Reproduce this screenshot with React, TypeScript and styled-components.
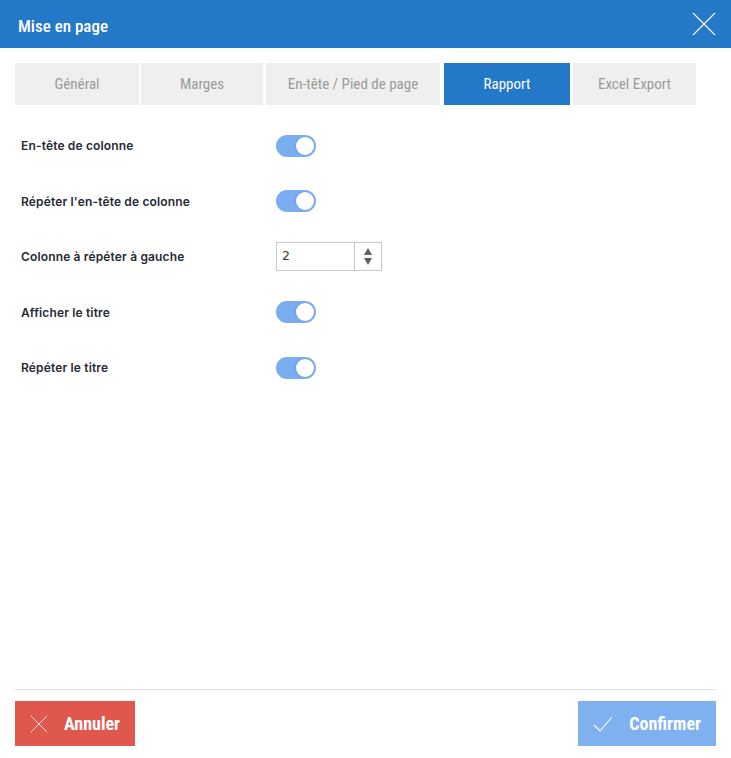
import React, { FC, useState } from 'react';
import styled, { createGlobalStyle } from 'styled-components';

const GlobalStyle = createGlobalStyle`
  html, body {
    margin: 0;
    padding: 0;
    background: #ffffff;
  }
  * {
    box-sizing: border-box;
  }
`;

const CONDENSED = `'Roboto Condensed', 'DejaVu Sans Condensed', Roboto, 'Liberation Sans', sans-serif`;

const Dialog = styled.div`
  width: 731px;
  height: 758px;
  display: flex;
  flex-flow: column nowrap;
  background: #fff;
`;

const Header = styled.header`
  height: 48px;
  background: #2378c8;
  display: flex;
  align-items: center;
  justify-content: space-between;
  padding: 3px 14px 0 18px;
`;

const Title = styled.h1`
  margin: 0;
  font-family: ${CONDENSED};
  font-weight: 500;
  font-size: 17px;
  color: #fff;
`;

const CloseButton = styled.button`
  width: 26px;
  height: 26px;
  margin-top: -3px;
  padding: 0;
  border: 0;
  background: transparent;
  display: flex;
  align-items: center;
  justify-content: center;
`;

const Tabs = styled.nav`
  display: flex;
  padding: 15px 15px 0;
`;

const Tab = styled.div<{ $active?: boolean; $w: number; $gap: number }>`
  width: ${p => p.$w}px;
  margin-right: ${p => p.$gap}px;
  height: 42px;
  display: flex;
  align-items: center;
  justify-content: center;
  background: ${p => (p.$active ? '#2378c8' : '#efefef')};
  color: ${p => (p.$active ? '#ffffff' : '#9a9a9a')};
  font-family: ${CONDENSED};
  font-weight: 400;
  font-size: 15px;
`;

const Content = styled.section`
  flex: 1;
  display: flex;
  flex-flow: column nowrap;
  padding: 17px 15px 0 21px;
`;

const Row = styled.div`
  height: 55.5px;
  display: flex;
  align-items: center;
  padding-bottom: 8px;
`;

const Label = styled.label`
  width: 255px;
  font-family: Inter, 'Noto Sans', sans-serif;
  font-weight: 600;
  font-size: 12px;
  letter-spacing: 0.15px;
  color: #272a36;
`;

const Switch = styled.div<{ $on: boolean }>`
  width: 40px;
  height: 22px;
  border-radius: 11px;
  background: ${p => (p.$on ? '#7baef0' : '#cccccc')};
  display: flex;
  align-items: center;
  justify-content: ${p => (p.$on ? 'flex-end' : 'flex-start')};
  padding: 0 2px;
  cursor: pointer;
`;

const Knob = styled.span`
  width: 18px;
  height: 18px;
  border-radius: 50%;
  background: #fff;
  box-shadow: -1px 0 2px rgba(0, 0, 0, 0.12);
`;

const NumberBox = styled.div`
  width: 106px;
  height: 29px;
  border: 1px solid #c8c8c8;
  display: flex;
`;

const NumberValue = styled.div`
  flex: 1;
  display: flex;
  align-items: center;
  padding: 0 0 2px 5px;
  font-family: 'DejaVu Sans', 'Liberation Sans', sans-serif;
  font-size: 12.5px;
  color: #3a3a3a;
`;

const Spinner = styled.div`
  width: 27px;
  border-left: 1px solid #c8c8c8;
  display: flex;
  flex-flow: column nowrap;
  align-items: center;
  justify-content: center;
  gap: 3px;
`;

const Arrow = styled.span<{ $down?: boolean }>`
  width: 0;
  height: 0;
  border-left: 4px solid transparent;
  border-right: 4px solid transparent;
  ${p =>
    p.$down
      ? 'border-top: 7px solid #606060;'
      : 'border-bottom: 7px solid #606060;'}
`;

const Footer = styled.footer`
  margin: 0 15px;
  border-top: 1px solid #dcdce2;
  padding: 11px 0 12px;
  display: flex;
  justify-content: space-between;
`;

const ActionButton = styled.button<{ $variant: 'cancel' | 'confirm' }>`
  height: 45px;
  border: 0;
  padding: 0 15px;
  display: flex;
  align-items: center;
  gap: 16px;
  background: ${p => (p.$variant === 'cancel' ? '#e0574d' : '#7fb0f0')};
  color: #fff;
  font-family: ${CONDENSED};
  font-weight: 700;
  font-size: 18px;
`;

const CrossIcon: FC<{ size: number }> = ({ size }) => (
  <svg width={size} height={size} viewBox="0 0 24 24" fill="none" stroke="#fff" strokeWidth={1.1}>
    <path d="M1 1 L23 23 M23 1 L1 23" />
  </svg>
);

const CheckIcon: FC = () => (
  <svg width={20} height={16} viewBox="0 0 20 16" fill="none" stroke="#fff" strokeWidth={1.1}>
    <path d="M1 9 L7 15 L19 1" />
  </svg>
);

const TABS = [
  { label: 'Général', w: 124, gap: 2 },
  { label: 'Marges', w: 122, gap: 3 },
  { label: 'En-tête / Pied de page', w: 174, gap: 4 },
  { label: 'Rapport', w: 126, gap: 3, active: true },
  { label: 'Excel Export', w: 123, gap: 0 }
];

const App: FC = () => {
  const [toggles, setToggles] = useState<Record<string, boolean>>({
    header: true,
    repeatHeader: true,
    showTitle: true,
    repeatTitle: true
  });

  const flip = (key: string) => setToggles({ ...toggles, [key]: !toggles[key] });

  const renderSwitch = (key: string) => (
    <Switch $on={toggles[key]} onClick={() => flip(key)}>
      <Knob />
    </Switch>
  );

  return (
    <>
      <GlobalStyle />
      <Dialog>
        <Header>
          <Title>Mise en page</Title>
          <CloseButton>
            <CrossIcon size={24} />
          </CloseButton>
        </Header>
        <Tabs>
          {TABS.map(t => (
            <Tab key={t.label} $w={t.w} $gap={t.gap} $active={t.active}>
              {t.label}
            </Tab>
          ))}
        </Tabs>
        <Content>
          <Row>
            <Label>En-tête de colonne</Label>
            {renderSwitch('header')}
          </Row>
          <Row>
            <Label>Répéter l'en-tête de colonne</Label>
            {renderSwitch('repeatHeader')}
          </Row>
          <Row>
            <Label>Colonne à répéter à gauche</Label>
            <NumberBox>
              <NumberValue>2</NumberValue>
              <Spinner>
                <Arrow />
                <Arrow $down />
              </Spinner>
            </NumberBox>
          </Row>
          <Row>
            <Label>Afficher le titre</Label>
            {renderSwitch('showTitle')}
          </Row>
          <Row>
            <Label>Répéter le titre</Label>
            {renderSwitch('repeatTitle')}
          </Row>
        </Content>
        <Footer>
          <ActionButton $variant="cancel">
            <CrossIcon size={18} />
            Annuler
          </ActionButton>
          <ActionButton $variant="confirm">
            <CheckIcon />
            Confirmer
          </ActionButton>
        </Footer>
      </Dialog>
    </>
  );
};

export default App;
